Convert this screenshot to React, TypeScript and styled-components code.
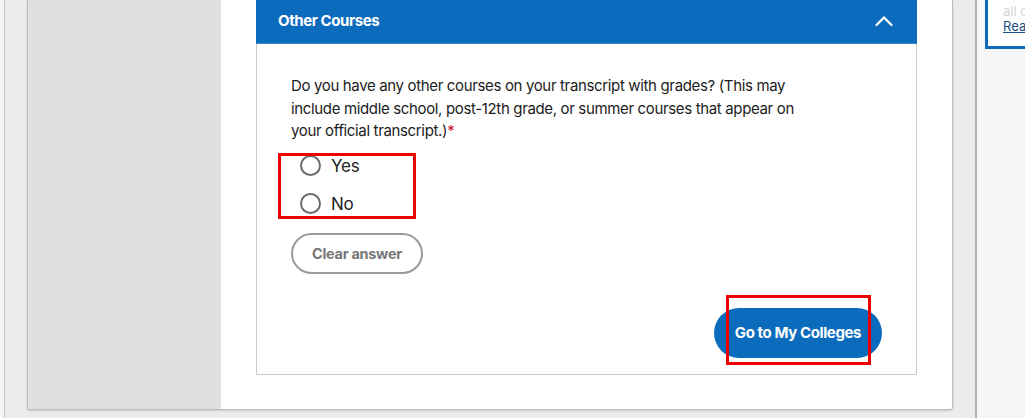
import styled, { createGlobalStyle } from "styled-components";

const GlobalStyle = createGlobalStyle`
  html, body {
    margin: 0;
    padding: 0;
    overflow: hidden;
    background: #ececec;
  }
  * {
    box-sizing: border-box;
  }
`;

const blue = "#0b6bbd";
const font = `"Inter", "Open Sans", "Liberation Sans", sans-serif`;

const Page = styled.div`
  display: flex;
  width: 1025px;
  height: 418px;
  background: #ececec;
  font-family: ${font};
`;

const LeftGutter = styled.div`
  width: 27px;
  flex-shrink: 0;
  border-left: 4px solid #f3f3f3;
  &::before {
    content: "";
    display: block;
    width: 1px;
    height: 100%;
    background: #c9c9c9;
  }
`;

const MainPanel = styled.div`
  display: flex;
  width: 926px;
  height: 410px;
  flex-shrink: 0;
  border: 1px solid #bdbdbd;
  border-top: none;
  border-radius: 0 0 3px 3px;
  box-shadow: 0 1px 2px rgba(0, 0, 0, 0.15);
  overflow: hidden;
`;

const Sidebar = styled.div`
  width: 193px;
  background: #e0e0e0;
  flex-shrink: 0;
`;

const Content = styled.div`
  flex: 1;
  background: #fff;
  padding-left: 35px;
`;

const Card = styled.section`
  width: 661px;
  border: 1px solid #c9c9c9;
  border-top: none;
  background: #fff;
`;

const CardHeader = styled.div`
  display: flex;
  align-items: center;
  justify-content: space-between;
  height: 44px;
  margin: 0 -1px;
  padding: 0 24px 2px 22px;
  background: ${blue};
  border-bottom: 1px solid #3b86c8;
  color: #fff;
  font-size: 15px;
  font-weight: 700;
  letter-spacing: -0.4px;
`;

const CardBody = styled.div`
  display: flex;
  flex-direction: column;
  align-items: flex-start;
  padding: 31px 34px 16px 34px;
`;

const Question = styled.p`
  margin: 0;
  width: 520px;
  font-size: 15px;
  line-height: 22.5px;
  letter-spacing: -0.35px;
  color: #1c1c1c;
`;

const Required = styled.span`
  color: #d0102a;
`;

const Annotated = styled.div`
  position: relative;
`;

const Highlight = styled.span<{ $top: number; $left: number; $w: number; $h: number }>`
  position: absolute;
  top: ${(p) => p.$top}px;
  left: ${(p) => p.$left}px;
  width: ${(p) => p.$w}px;
  height: ${(p) => p.$h}px;
  border: 3px solid #ee0000;
  pointer-events: none;
`;

const RadioGroup = styled.div`
  display: flex;
  flex-direction: column;
  gap: 18px;
  margin-top: 13px;
  padding-left: 9px;
`;

const RadioRow = styled.label`
  display: flex;
  align-items: center;
  gap: 10px;
  height: 20px;
  font-size: 17px;
  letter-spacing: -0.2px;
  color: #222;
`;

const RadioCircle = styled.span`
  width: 21px;
  height: 21px;
  border-radius: 50%;
  border: 2px solid #6b6b6b;
  flex-shrink: 0;
`;

const ClearButton = styled.button`
  margin-top: 19px;
  height: 41px;
  padding: 0 19px;
  border: 2px solid #9a9a9a;
  border-radius: 21px;
  background: #fff;
  color: #777;
  font-family: ${font};
  font-size: 14.5px;
  font-weight: 700;
  letter-spacing: -0.3px;
`;

const Footer = styled.div`
  align-self: stretch;
  display: flex;
  justify-content: flex-end;
  margin-top: 34px;
`;

const PrimaryButton = styled.button`
  height: 50px;
  padding: 0 21px;
  border: none;
  border-radius: 25px;
  background: ${blue};
  color: #fff;
  font-family: ${font};
  font-size: 15px;
  font-weight: 700;
  letter-spacing: -0.4px;
`;

const Gap = styled.div`
  width: 22px;
  flex-shrink: 0;
`;

const RightColumn = styled.aside`
  flex: 1;
  background: #f5f5f5;
  border-left: 2px solid #b3b3b3;
  padding-left: 8px;
`;

const InfoCard = styled.div`
  height: 49px;
  border: 3px solid ${blue};
  border-top: none;
  border-right: none;
  background: #fff;
  padding: 4px 0 0 15px;
  font-size: 13px;
  line-height: 15px;
  white-space: nowrap;
  overflow: hidden;
`;

const Faded = styled.div`
  color: #d4d4d4;
`;

const ReadLink = styled.a`
  display: block;
  color: #1b4f85;
  text-decoration: underline;
`;

const ChevronUp = () => (
  <svg width="18" height="12" viewBox="0 0 18 12" fill="none">
    <path d="M1.5 10L9 2.5L16.5 10" stroke="#fff" strokeWidth="2.2" strokeLinecap="round" />
  </svg>
);

export default function App() {
  return (
    <>
      <GlobalStyle />
      <Page>
        <LeftGutter />
        <MainPanel>
          <Sidebar />
          <Content>
            <Card>
              <CardHeader>
                <span>Other Courses</span>
                <ChevronUp />
              </CardHeader>
              <CardBody>
                <Question>
                  Do you have any other courses on your transcript with grades? (This may
                  <br />
                  include middle school, post-12th grade, or summer courses that appear on
                  <br />
                  your official transcript.)<Required>*</Required>
                </Question>
                <Annotated>
                  <RadioGroup>
                    <RadioRow>
                      <RadioCircle />
                      Yes
                    </RadioRow>
                    <RadioRow>
                      <RadioCircle />
                      No
                    </RadioRow>
                  </RadioGroup>
                  <Highlight $top={10} $left={-13} $w={138} $h={66} />
                </Annotated>
                <ClearButton>Clear answer</ClearButton>
                <Footer>
                  <Annotated>
                    <PrimaryButton>Go to My Colleges</PrimaryButton>
                    <Highlight $top={-13} $left={12} $w={145} $h={70} />
                  </Annotated>
                </Footer>
              </CardBody>
            </Card>
          </Content>
        </MainPanel>
        <Gap />
        <RightColumn>
          <InfoCard>
            <Faded>all o</Faded>
            <ReadLink>Read</ReadLink>
          </InfoCard>
        </RightColumn>
      </Page>
    </>
  );
}
